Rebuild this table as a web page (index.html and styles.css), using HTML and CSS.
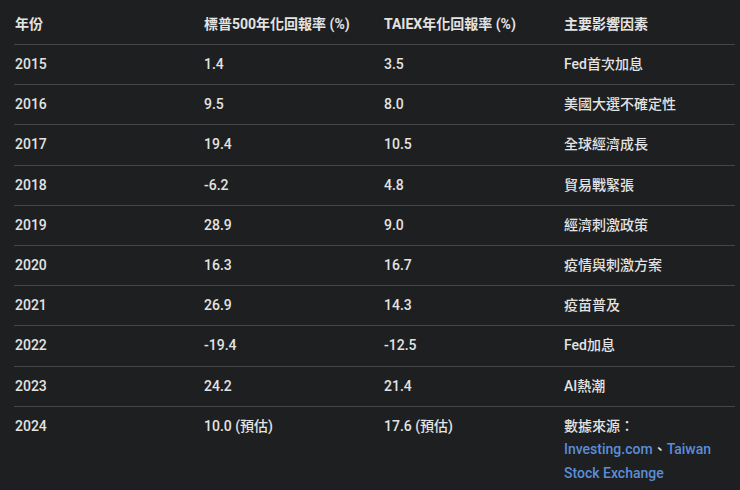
FILE: index.html
```html
<!DOCTYPE html>
<html lang="zh-Hant">
<head>
<meta charset="utf-8">
<link rel="stylesheet" href="styles.css">
</head>
<body>
<div class="page">
<table class="data">
<colgroup><col class="c1"><col class="c2"><col class="c3"><col class="c4"></colgroup>
<thead>
<tr><th>年份</th><th>標普500年化回報率 (%)</th><th>TAIEX年化回報率 (%)</th><th>主要影響因素</th></tr>
</thead>
<tbody>
<tr><td>2015</td><td>1.4</td><td>3.5</td><td>Fed首次加息</td></tr>
<tr><td>2016</td><td>9.5</td><td>8.0</td><td>美國大選不確定性</td></tr>
<tr><td>2017</td><td>19.4</td><td>10.5</td><td>全球經濟成長</td></tr>
<tr><td>2018</td><td>-6.2</td><td>4.8</td><td>貿易戰緊張</td></tr>
<tr><td>2019</td><td>28.9</td><td>9.0</td><td>經濟刺激政策</td></tr>
<tr><td>2020</td><td>16.3</td><td>16.7</td><td>疫情與刺激方案</td></tr>
<tr><td>2021</td><td>26.9</td><td>14.3</td><td>疫苗普及</td></tr>
<tr><td>2022</td><td>-19.4</td><td>-12.5</td><td>Fed加息</td></tr>
<tr><td>2023</td><td>24.2</td><td>21.4</td><td>AI熱潮</td></tr>
<tr class="last"><td>2024</td><td>10.0 (預估)</td><td>17.6 (預估)</td><td>數據來源：<a class="link" href="#">Investing.com</a>、<a class="link" href="#">Taiwan Stock Exchange</a></td></tr>
</tbody>
</table>
</div>
</body>
</html>
```
FILE: styles.css
```css
html, body {
  margin: 0;
  padding: 0;
  background: #1e1f20;
}
body {
  color: #e3e3e3;
  font-family: "Roboto", "Noto Sans CJK TC", sans-serif;
  font-size: 14px;
  line-height: 24px;
}
.page {
  padding: 4px 5px 0 14px;
}
.data {
  border-collapse: collapse;
  table-layout: fixed;
  width: 721px;
}
.c1 { width: 189px; }
.c2 { width: 180px; }
.c3 { width: 180px; }
.c4 { width: 172px; }
.data th,
.data td {
  text-align: left;
  vertical-align: top;
  padding: 7px 12px 8.2px 1px;
  border-bottom: 1px solid #454647;
}
.data th {
  font-weight: 700;
  padding-top: 8px;
  padding-bottom: 8px;
}
.data td {
  font-weight: 500;
}
.data tr.last td {
  border-bottom: none;
  padding-top: 8px;
  line-height: 23.5px;
}
.link {
  color: #5a8ed8;
  text-decoration: none;
}
```
